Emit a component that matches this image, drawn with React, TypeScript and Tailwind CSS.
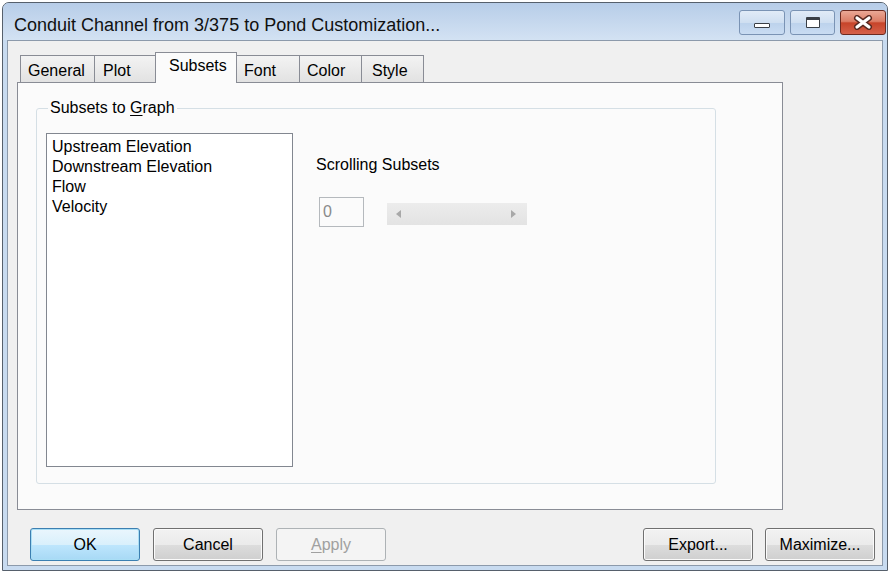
import React from 'react';

const tabs = [
  { label: 'General', box: 'w-[74px] border-l', pad: 'pl-[7px]' },
  { label: 'Plot', box: 'w-[61px] border-l', pad: 'pl-[8px]' },
  { label: 'Subsets', box: 'w-[82px] border-l border-r', pad: 'pl-[13px]', active: true },
  { label: 'Font', box: 'w-[63px] border-r', pad: 'pl-[7px]' },
  { label: 'Color', box: 'w-[62px] border-r', pad: 'pl-[7px]' },
  { label: 'Style', box: 'w-[62px] border-r', pad: 'pl-[10px]' },
];

const subsets = ['Upstream Elevation', 'Downstream Elevation', 'Flow', 'Velocity'];

function Button({ children, variant = 'normal' }: { children: React.ReactNode; variant?: 'normal' | 'default' | 'disabled' }) {
  const look =
    variant === 'default'
      ? 'border-[#3c7fb1] shadow-[inset_0_0_0_1px_#a9def5] bg-[linear-gradient(#eaf6fd_0%,#d9f0fc_50%,#bee6fd_51%,#a7d9f5_100%)] text-black'
      : variant === 'disabled'
        ? 'border-[#adb2b5] bg-[#f4f4f4] text-[#a0a0a0]'
        : 'border-[#707070] shadow-[inset_0_0_0_1px_#fbfbfb] bg-[linear-gradient(#f2f2f2_0%,#ebebeb_50%,#dddddd_51%,#cfcfcf_100%)] text-black';
  return (
    <div className={`w-[110px] h-[33px] rounded-[3px] border flex items-center justify-center text-[16px] leading-[20px] ${look}`}>
      {children}
    </div>
  );
}

export default function App() {
  return (
    <div className="w-[893px] h-[573px] bg-white pl-[2px] pt-[2px] font-['Liberation_Sans',Arial,sans-serif] overflow-hidden">
      <div className="w-[886px] h-[569px] border border-[#56606c] rounded-t-[7px] bg-[#c8dbf0] flex flex-col overflow-hidden">
        {/* title bar */}
        <div className="h-[37px] flex justify-between bg-[linear-gradient(#b7cde8,#d3e2f3)] shrink-0">
          <div className="pl-[11px] pt-[10px] text-[18px] leading-[24px] text-[#111]">
            Conduit Channel from 3/375 to Pond Customization...
          </div>
          <div className="flex gap-[5px] pt-[7px] pr-[1px]">
            <div className="w-[46px] h-[25px] rounded-[3px] border border-[#7a93b4] bg-[linear-gradient(#e1ebf7_0%,#cfdff1_50%,#bcd2ec_51%,#c9dcf2_100%)] flex items-end justify-center pb-[6px]">
              <div className="w-[16px] h-[5px] border border-[#3a3f46] bg-white rounded-[1px]" />
            </div>
            <div className="w-[45px] h-[25px] rounded-[3px] border border-[#7a93b4] bg-[linear-gradient(#e1ebf7_0%,#cfdff1_50%,#bcd2ec_51%,#c9dcf2_100%)] flex items-center justify-center">
              <div className="w-[14px] h-[11px] border border-[#3a3f46] border-t-[3px] bg-white rounded-[1px]" />
            </div>
            <div className="w-[46px] h-[25px] rounded-[3px] border border-[#6b2a20] bg-[linear-gradient(#eaa896_0%,#dc7d66_45%,#c7442a_52%,#d5614a_100%)] flex items-center justify-center">
              <svg width="20" height="15" viewBox="0 0 20 15">
                <path d="M4 3 L16 12 M16 3 L4 12" stroke="#5a2a22" strokeWidth="6" strokeLinecap="round" />
                <path d="M4 3 L16 12 M16 3 L4 12" stroke="#ffffff" strokeWidth="3.2" strokeLinecap="round" />
              </svg>
            </div>
          </div>
        </div>

        {/* client area */}
        <div className="flex-1 ml-[4px] mr-[4px] mb-[4px] border border-[#8c9aab] bg-[#f0f0f0] flex flex-col text-black">
          <div className="pl-[9px] pt-[11px]">
            <div className="flex items-end pl-[3px] h-[30px]">
              {tabs.map((t) =>
                t.active ? (
                  <div
                    key={t.label}
                    className={`relative z-10 h-[31px] -mb-px border-t border-[#898c95] bg-[#fbfbfb] pt-[3px] text-[16px] leading-[20px] ${t.box} ${t.pad}`}
                  >
                    {t.label}
                  </div>
                ) : (
                  <div
                    key={t.label}
                    className={`h-[27px] border-t border-[#898c95] bg-[linear-gradient(#f3f3f3,#e2e2e2)] pt-[5px] text-[16px] leading-[20px] ${t.box} ${t.pad}`}
                  >
                    {t.label}
                  </div>
                ),
              )}
            </div>

            <div className="w-[766px] h-[428px] border border-[#898c95] bg-[#fbfbfb] pl-[18px] pt-[25px]">
              <div className="relative w-[680px] h-[376px] border border-[#d5dfe5] rounded-[3px] pl-[9px] pt-[24px] flex">
                <div className="absolute left-[11px] -top-[11px] px-[2px] bg-[#fbfbfb] text-[16px] leading-[20px]">
                  Subsets to <span className="underline underline-offset-2">G</span>raph
                </div>

                <div className="w-[247px] h-[334px] border border-[#828790] bg-white pl-[5px] pt-[3px] text-[16px] leading-[20px]">
                  {subsets.map((s) => (
                    <div key={s}>{s}</div>
                  ))}
                </div>

                <div className="ml-[23px] pt-[22px]">
                  <div className="text-[16px] leading-[20px]">Scrolling Subsets</div>
                  <div className="mt-[22px] flex items-start">
                    <div className="ml-[3px] w-[45px] h-[30px] border border-[#b5b9bd] bg-[#fbfbfb] flex items-center pl-[3px] text-[16px] leading-[20px] text-[#8a8a8a]">
                      0
                    </div>
                    <div className="ml-[23px] mt-[6px] w-[140px] h-[22px] bg-[linear-gradient(#ececec,#e3e3e3)] flex items-center justify-between pl-[9px] pr-[11px]">
                      <svg width="5" height="8" viewBox="0 0 5 8">
                        <path d="M5 0 L0 4 L5 8 Z" fill="#a8a8a8" />
                      </svg>
                      <svg width="5" height="8" viewBox="0 0 5 8">
                        <path d="M0 0 L5 4 L0 8 Z" fill="#a8a8a8" />
                      </svg>
                    </div>
                  </div>
                </div>
              </div>
            </div>
          </div>

          <div className="mt-[18px] pl-[22px] pr-[7px] flex justify-between">
            <div className="flex gap-[13px]">
              <Button variant="default">OK</Button>
              <Button>Cancel</Button>
              <Button variant="disabled">
                <span>
                  <span className="underline underline-offset-2">A</span>pply
                </span>
              </Button>
            </div>
            <div className="flex gap-[12px]">
              <Button>Export...</Button>
              <Button>Maximize...</Button>
            </div>
          </div>
        </div>
      </div>
    </div>
  );
}
